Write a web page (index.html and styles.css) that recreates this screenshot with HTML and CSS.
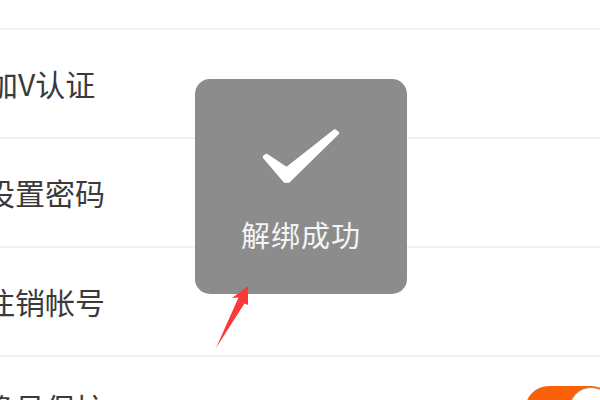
FILE: index.html
```html
<!DOCTYPE html>
<html lang="zh">
<head>
<meta charset="utf-8">
<title>解绑成功</title>
<link rel="stylesheet" href="styles.css">
</head>
<body>
<div class="screen">
  <div class="list">
    <div class="row row-top"></div>
    <div class="row"><span class="label label-v">加V认证</span></div>
    <div class="row"><span class="label">设置密码</span></div>
    <div class="row"><span class="label">注销帐号</span></div>
    <div class="row row-last"><span class="label">隐号保护</span><span class="switch"><span class="knob"></span></span></div>
  </div>
  <div class="toast">
    <svg class="check" width="82" height="62" viewBox="0 0 82 62"><path d="M4.500 32L6.500 30.500L26.700 44L75 6L77.500 8L28.500 56L25 56Z" fill="#fff" stroke="#fff" stroke-width="3.500" stroke-linejoin="round"/></svg>
    <div class="toast-text">解绑成功</div>
  </div>
  <svg class="arrow" width="40" height="64" viewBox="0 0 40 64"><path d="M32 0L32 19L28.500 17.500L0 62L22.500 11.500L16 12Z" fill="#fb3a38"/></svg>
</div>
</body>
</html>
```
FILE: styles.css
```css
html, body { margin: 0; padding: 0; }
body { width: 600px; height: 400px; overflow: hidden; background: #fff; }
.screen { position: relative; width: 600px; height: 400px; overflow: hidden; background: #fff; font-family: "Noto Sans CJK SC", "Liberation Sans", sans-serif; }
.list { display: flex; flex-direction: column; }
.row { box-sizing: border-box; height: 109px; flex: none; display: flex; align-items: center; justify-content: space-between; border-bottom: 2px solid #f1f1f1; padding-bottom: 2px; }
.row-top { height: 30px; padding-bottom: 0; }
.row-last { border-bottom: 0; align-items: flex-start; padding: 30px 0 0; }
.label { font-size: 30px; color: #3a3a3a; white-space: nowrap; line-height: 40px; margin-left: -15px; }
.label-v { margin-left: -12px; }
.switch { width: 90px; height: 48px; margin-right: -15px; margin-top: -1px; border-radius: 24px; background: #f96008; padding: 2px 3px; box-sizing: border-box; display: flex; justify-content: flex-end; }
.knob { display: block; width: 42px; height: 42px; border-radius: 50%; background: #fff; box-shadow: 0 0 1px 1px #c98a5f; }
.toast { position: absolute; left: 195px; top: 79px; width: 212px; height: 215px; border-radius: 15px; background: #8c8c8c; display: flex; flex-direction: column; align-items: center; }
.check { margin-top: 46px; }
.toast-text { margin-top: 27px; font-size: 29px; line-height: 40px; letter-spacing: 1px; color: #f4f4f4; }
.arrow { position: absolute; left: 216px; top: 286px; }
```
